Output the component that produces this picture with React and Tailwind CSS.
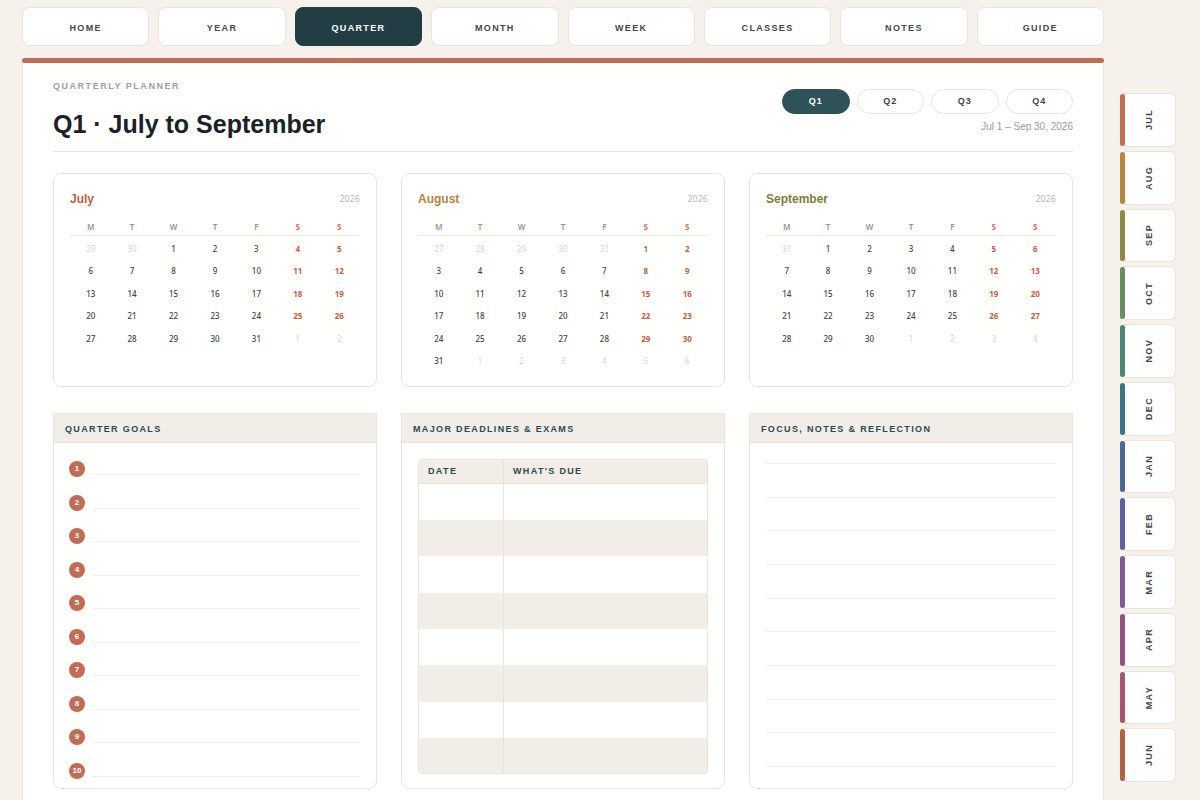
const NAV = ["Home", "Year", "Quarter", "Month", "Week", "Classes", "Notes", "Guide"];

const QUARTERS = ["Q1", "Q2", "Q3", "Q4"];

const TABS = [
  { label: "Jul", bar: "bg-[#c46d54]" },
  { label: "Aug", bar: "bg-[#b88541]" },
  { label: "Sep", bar: "bg-[#8b8b47]" },
  { label: "Oct", bar: "bg-[#6b8c5f]" },
  { label: "Nov", bar: "bg-[#4a8577]" },
  { label: "Dec", bar: "bg-[#3a7488]" },
  { label: "Jan", bar: "bg-[#4a6998]" },
  { label: "Feb", bar: "bg-[#6060a0]" },
  { label: "Mar", bar: "bg-[#7d5a96]" },
  { label: "Apr", bar: "bg-[#935286]" },
  { label: "May", bar: "bg-[#a8566b]" },
  { label: "Jun", bar: "bg-[#b16340]" },
];

const MONTHS = [
  { name: "July", color: "text-[#c05f47]", lead: [29, 30], days: 31 },
  { name: "August", color: "text-[#b5843f]", lead: [27, 28, 29, 30, 31], days: 31 },
  { name: "September", color: "text-[#7d7d3c]", lead: [31], days: 30 },
];

const LABEL = "text-[9px] font-bold uppercase tracking-[0.15em]";

function weeksOf({ lead, days }) {
  const cells = lead.map((day) => ({ day, outside: true }));
  for (let day = 1; day <= days; day++) cells.push({ day, outside: false });
  for (let day = 1; cells.length % 7 !== 0; day++) cells.push({ day, outside: true });
  const weeks = [];
  for (let i = 0; i < cells.length; i += 7) weeks.push(cells.slice(i, i + 7));
  return weeks;
}

function dayClass(cell, column) {
  if (cell.outside) return "font-normal text-[#d5d4cf]";
  if (column > 4) return "font-bold text-[#c05f47]";
  return "font-medium text-[#3b444b]";
}

function MonthCard({ month }) {
  return (
    <section className="rounded-lg border border-[#e8e5df] bg-[#fffffe] px-4 pt-[15px] pb-4">
      <div className="flex h-5 items-center justify-between">
        <h2 className={`text-[12px] font-bold ${month.color}`}>{month.name}</h2>
        <span className="font-['Noto_Sans',sans-serif] text-[9px] text-[#b5b9bd]">2026</span>
      </div>
      <table className="mt-2 w-full table-fixed border-collapse text-center font-['Noto_Sans',sans-serif] text-[8px] leading-3">
        <thead>
          <tr className="h-[18px] border-b border-[#ebe9e5]">
            {["M", "T", "W", "T", "F", "S", "S"].map((d, i) => (
              <th
                key={i}
                scope="col"
                className={i > 4 ? "p-0 pt-0.5 font-bold text-[#c9705b]" : "p-0 pt-0.5 font-semibold text-[#8d9499]"}
              >
                {d}
              </th>
            ))}
          </tr>
        </thead>
        <tbody>
          {weeksOf(month).map((week, r) => (
            <tr key={r} className="h-[23px] even:h-[22px]">
              {week.map((cell, c) => (
                <td key={c} className={`p-0 pt-1 ${dayClass(cell, c)}`}>
                  {cell.day}
                </td>
              ))}
            </tr>
          ))}
        </tbody>
      </table>
    </section>
  );
}

function Panel({ title, children }) {
  return (
    <section className="flex flex-col rounded-b-lg border border-[#e8e5df] bg-[#fffffe]">
      <h2 className={`flex h-[29px] items-center border-b border-[#e6e1d9] bg-[#f2ede7] px-[11px] pt-1 text-[#2b4a50] ${LABEL}`}>
        {title}
      </h2>
      {children}
    </section>
  );
}

export default function App() {
  return (
    <div className="flex min-h-screen items-stretch gap-4 bg-[#f6f1eb] pr-6 pl-[22px] font-['Liberation_Sans',Arial,sans-serif] text-[#1b2126]">
      <div className="flex min-w-0 flex-1 flex-col">
        <nav aria-label="Planner" className="flex gap-[9px] pt-[7px] pb-3">
          {NAV.map((item) => (
            <a
              key={item}
              href={`#${item.toLowerCase()}`}
              className={`flex h-[39px] flex-1 items-center justify-center rounded-lg border pt-1 ${LABEL} ${
                item === "Quarter"
                  ? "border-[#233d44] bg-[#233d44] text-white"
                  : "border-[#e9e4dc] bg-white text-[#3f484e]"
              }`}
            >
              {item}
            </a>
          ))}
        </nav>

        <div className="h-[5px] rounded-sm bg-[#c26c55]" />
        <main className="flex-1 border-x border-[#e9e4dc] bg-[#fffffe] px-[30px] pb-3">
          <header className="flex items-start justify-between border-b border-[#e6e4df]">
            <div className="pt-[17px] pb-3">
              <p className="text-[9px] leading-3 font-bold tracking-[0.17em] text-[#9aa0a5] uppercase">
                Quarterly Planner
              </p>
              <h1 className="mt-[17px] text-[25px] leading-[30px] font-bold">Q1 · July to September</h1>
            </div>
            <div className="flex flex-col items-end pt-[26px]">
              <div className="grid w-[291px] grid-cols-4 gap-[7px]">
                {QUARTERS.map((q) => (
                  <button
                    key={q}
                    type="button"
                    className={`h-[25px] rounded-full border text-[9px] font-bold tracking-widest ${
                      q === "Q1"
                        ? "border-[#2f5259] bg-[#2f5259] text-white"
                        : "border-[#e8e4dc] bg-[#fffffe] text-[#3b444b]"
                    }`}
                  >
                    {q}
                  </button>
                ))}
              </div>
              <p className="mt-[5px] text-[10px] leading-4 text-[#959ba1]">Jul 1 – Sep 30, 2026</p>
            </div>
          </header>

          <div className="mt-[21px] grid grid-cols-3 gap-6">
            {MONTHS.map((m) => (
              <MonthCard key={m.name} month={m} />
            ))}
          </div>

          <div className="mt-[26px] grid grid-cols-3 gap-6">
            <Panel title="Quarter Goals">
              <ol className="flex flex-1 flex-col justify-between pt-[18px] pr-4 pb-[9px] pl-[15px]">
                {Array.from({ length: 10 }, (_, i) => (
                  <li key={i} className="flex gap-[7px]">
                    <span className="flex size-4 items-center justify-center rounded-full bg-[#c26c55] text-[8px] font-bold text-white">
                      {i + 1}
                    </span>
                    <span className="h-[14px] flex-1 border-b border-[#f0efed]" />
                  </li>
                ))}
              </ol>
            </Panel>

            <Panel title="Major Deadlines & Exams">
              <div className="px-4 pt-4 pb-[14px]">
                <div className="overflow-hidden rounded-[4px]">
                  <table className="w-full table-fixed border-collapse border border-[#ebe7e0] text-left">
                    <thead>
                      <tr className={`h-[24px] border-b border-[#e6e1d9] bg-[#f2ede7] text-[#2b4a50] ${LABEL}`}>
                        <th scope="col" className="w-[85px] border-r border-[#e6e1d9] p-0 pl-[9px]">Date</th>
                        <th scope="col" className="p-0 pl-[9px]">What's Due</th>
                      </tr>
                    </thead>
                    <tbody>
                      {Array.from({ length: 8 }, (_, i) => (
                        <tr key={i} className="h-[36px] even:bg-[#f2ede7] nth-[3n]:h-[37px]">
                          <td className="border-r border-[#e8e4dd] p-0" />
                          <td className="p-0" />
                        </tr>
                      ))}
                    </tbody>
                  </table>
                </div>
              </div>
            </Panel>

            <Panel title="Focus, Notes & Reflection">
              <div className="flex flex-1 flex-col justify-between px-4 pt-5 pb-[21px]">
                {Array.from({ length: 10 }, (_, i) => (
                  <div key={i} className="border-b border-[#f0efed]" />
                ))}
              </div>
            </Panel>
          </div>
        </main>
      </div>

      <nav aria-label="Months" className="mt-[93px] flex h-[689px] w-14 flex-col gap-1">
        {TABS.map((t) => (
          <a
            key={t.label}
            href={`#${t.label.toLowerCase()}`}
            className="flex flex-1 rounded-md border border-l-0 border-[#e9e4dc] bg-white"
          >
            <span className={`w-[5px] rounded-sm ${t.bar}`} />
            <span className="flex flex-1 items-center justify-center">
              <span className={`rotate-180 text-[#3f484e] [writing-mode:vertical-rl] ${LABEL}`}>{t.label}</span>
            </span>
          </a>
        ))}
      </nav>
    </div>
  );
}
